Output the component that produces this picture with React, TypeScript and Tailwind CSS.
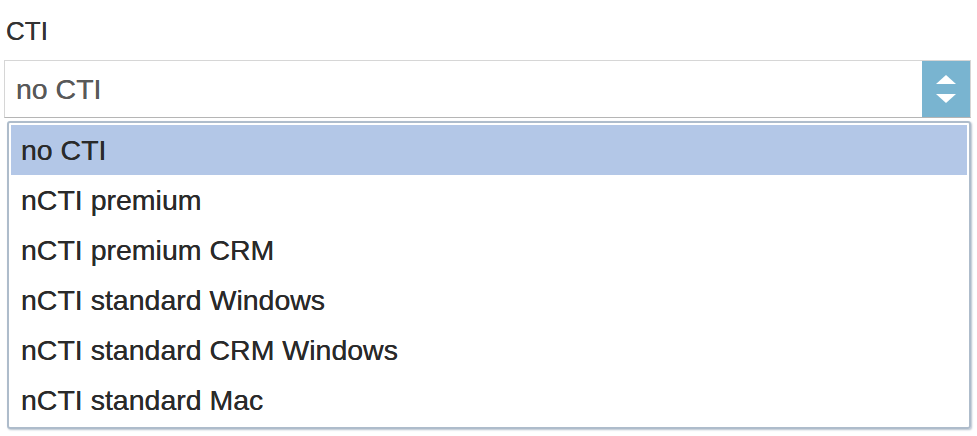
const options = [
  'no CTI',
  'nCTI premium',
  'nCTI premium CRM',
  'nCTI standard Windows',
  'nCTI standard CRM Windows',
  'nCTI standard Mac',
];

export default function App() {
  const selected = 'no CTI';

  return (
    <div className="w-[977px] h-[436px] bg-white pt-[16px] px-[4px] overflow-hidden font-['Liberation_Sans',Arial,sans-serif] [text-shadow:0_0_0.6px_currentColor]">
      <div className="pl-[2px] text-[26px] leading-[30px] text-[#333]">CTI</div>

      <div className="mt-[14px] mr-[2px] h-[58px] flex border border-[#d6d6d6] border-b-[#b5b5b5]">
        <div className="flex-1 flex items-center pl-[11px] text-[28.5px] text-[#595959]">
          {selected}
        </div>
        <div className="w-[48px] bg-[#79b4d0] flex flex-col items-center justify-center gap-[10px]">
          <svg width="20" height="9" viewBox="0 0 20 9">
            <polygon points="10,0 20,9 0,9" fill="#fff" />
          </svg>
          <svg width="20" height="9" viewBox="0 0 20 9">
            <polygon points="0,0 20,0 10,9" fill="#fff" />
          </svg>
        </div>
      </div>

      <div className="mt-[3px] ml-[3px] mr-[2px] border-[2px] border-[#aebccb] rounded-[3px] p-[2px] shadow-[1px_1px_2px_#b8c3cf]">
        {options.map((o) => (
          <div
            key={o}
            className={
              'h-[50px] flex items-center pl-[10px] text-[28.5px] text-[#2a2a2a] ' +
              (o === selected ? 'bg-[#b3c7e7]' : '')
            }
          >
            {o}
          </div>
        ))}
      </div>
    </div>
  );
}
